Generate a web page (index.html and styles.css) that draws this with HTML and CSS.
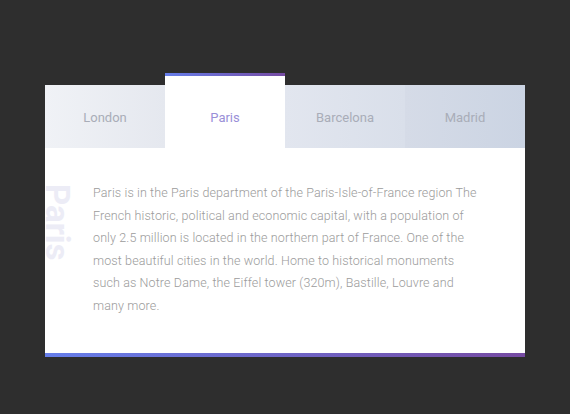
FILE: index.html
```html
<!DOCTYPE html>
<html lang="en">

<head>
    <meta charset="UTF-8">
    <meta name="viewport" content="width=device-width, initial-scale=1.0">
    <title>City Tabs</title>
    <link rel="stylesheet" href="styles.css">
</head>

<body>
    <div class="tabs-card">
        <div class="tab-bar">
            <div class="tab tab-london">London</div>
            <div class="tab tab-active">Paris</div>
            <div class="tab tab-barcelona">Barcelona</div>
            <div class="tab tab-madrid">Madrid</div>
        </div>
        <div class="tab-panel">
            <span class="panel-label">Paris</span>
            <p class="panel-text">Paris is in the Paris department of the Paris-Isle-of-France region The French historic, political and economic capital, with a population of only 2.5 million is located in the northern part of France. One of the most beautiful cities in the world. Home to historical monuments such as Notre Dame, the Eiffel tower (320m), Bastille, Louvre and many more.</p>
        </div>
        <div class="bottom-bar"></div>
    </div>
</body>

</html>
```

FILE: styles.css
```css
body {
    margin: 0;
    padding-top: 73px;
    background-color: #2e2e2e;
    font-family: Roboto, "Liberation Sans", sans-serif;
}

.tabs-card {
    width: 480px;
    margin: 0 auto;
}

.tab-bar {
    display: flex;
    align-items: flex-end;
}

.tab {
    width: 120px;
    height: 63px;
    padding-top: 2px;
    display: flex;
    align-items: center;
    justify-content: center;
    font-size: 13px;
    color: #a9adb8;
    box-sizing: border-box;
}

.tab-london {
    background: linear-gradient(to right, #f0f2f6, #e5e8ef);
}

.tab-barcelona {
    background: linear-gradient(to right, #e2e6ef, #d9dfea);
}

.tab-madrid {
    background: linear-gradient(to right, #d5dbe7, #cbd4e3);
}

.tab-active {
    height: 75px;
    padding-top: 14px;
    color: #9a8fd8;
    background:
        linear-gradient(to right, #667eea, #764ba2) top / 100% 3px no-repeat,
        #fff;
}

.tab-panel {
    position: relative;
    overflow: hidden;
    background-color: #fff;
    padding: 34px 47px 36px 48px;
}

.panel-label {
    position: absolute;
    left: 1px;
    top: 36px;
    writing-mode: vertical-rl;
    font-size: 33px;
    font-weight: 700;
    line-height: 0.7;
    color: #ececf6;
}

.panel-text {
    margin: 0;
    font-size: 12.5px;
    font-weight: 300;
    line-height: 22.5px;
    letter-spacing: 0.12px;
    color: #9b9b9b;
}

.bottom-bar {
    height: 4px;
    background: linear-gradient(to right, #667eea, #764ba2);
}
```
